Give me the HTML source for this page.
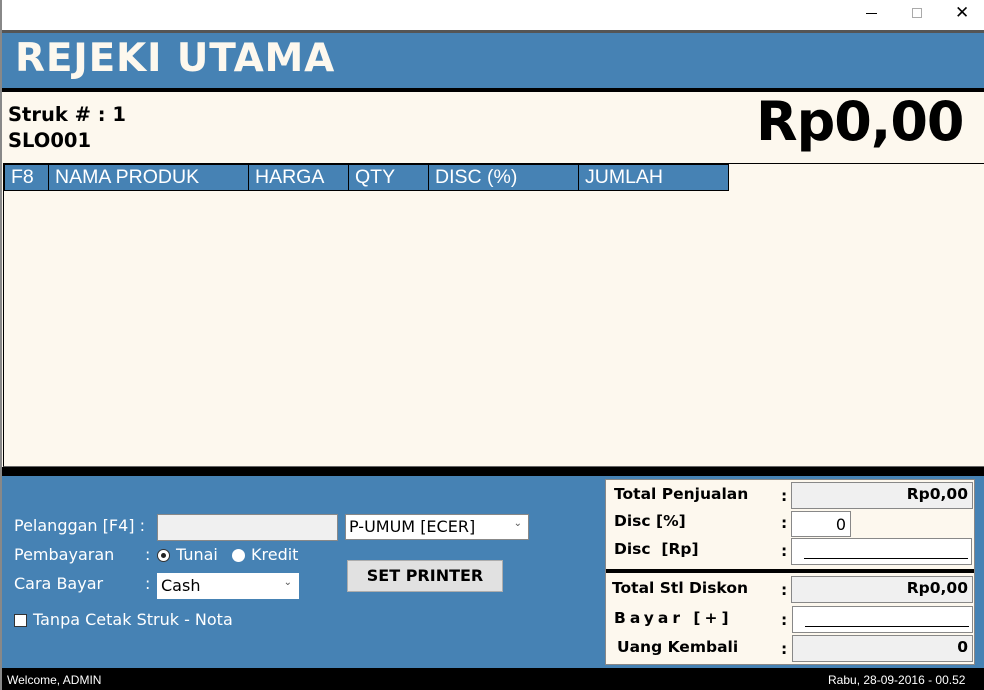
<!DOCTYPE html>
<html><head><style>
*{margin:0;padding:0;box-sizing:border-box}
body{width:984px;height:690px;position:relative;overflow:hidden;background:#fff;font-family:"DejaVu Sans","Liberation Sans",sans-serif}
.a{position:absolute}
.w{color:#fff;font-size:16px}
.b{font-weight:bold;font-size:15.5px;color:#000}
.box{position:absolute;border:1px solid #888;background:#f0f0f0}
.wb{position:absolute;border:1px solid #888;background:#fff}
</style></head><body>
<div class="a" style="left:0;top:0;width:2px;height:690px;background:#888"></div>
<div class="a" style="left:866px;top:13px;width:11px;height:1px;background:#000"></div>
<div class="a" style="left:912px;top:8px;width:10px;height:10px;border:1px solid #aaa"></div>
<div class="a" style="left:955px;top:3px;font-size:17px;color:#000;font-family:'DejaVu Sans'">✕</div>
<div class="a" style="left:2px;top:30px;width:982px;height:3px;background:#555"></div>
<div class="a" style="left:2px;top:33px;width:982px;height:55px;background:#4682b4"></div>
<div class="a" style="left:15px;top:36px;font-size:39px;font-weight:bold;color:#fdf8ee;letter-spacing:0.8px">REJEKI UTAMA</div>
<div class="a" style="left:2px;top:88px;width:982px;height:4px;background:#000"></div>
<div class="a" style="left:2px;top:92px;width:982px;height:375px;background:#fdf8ee"></div>
<div class="a b" style="left:8px;top:103px;font-size:19.5px">Struk # : 1</div>
<div class="a b" style="left:8px;top:129px;font-size:19.5px">SLO001</div>
<div class="a b" style="left:756px;top:90px;font-size:54px;letter-spacing:-1px">Rp0,00</div>
<div class="a" style="left:3px;top:163px;width:981px;height:304px;border-top:1px solid #000;border-left:1px solid #000;border-bottom:1px solid #666"></div>
<div class="a" style="left:4px;top:164px;width:725px;height:27px;background:#4682b4;border:1px solid #000;display:flex;color:#fff;font-size:19.5px;font-family:'Liberation Sans',sans-serif">
<div style="width:44px;border-right:1px solid #000;padding:1px 0 0 6px">F8</div>
<div style="width:200px;border-right:1px solid #000;padding:1px 0 0 6px">NAMA PRODUK</div>
<div style="width:100px;border-right:1px solid #000;padding:1px 0 0 6px">HARGA</div>
<div style="width:80px;border-right:1px solid #000;padding:1px 0 0 6px">QTY</div>
<div style="width:150px;border-right:1px solid #000;padding:1px 0 0 6px">DISC (%)</div>
<div style="padding:1px 0 0 6px">JUMLAH</div>
</div>
<div class="a" style="left:2px;top:467px;width:982px;height:9px;background:#000"></div>
<div class="a" style="left:2px;top:476px;width:982px;height:192px;background:#4682b4"></div>
<div class="a w" style="left:14px;top:516px">Pelanggan [F4] :</div>
<div class="box" style="left:157px;top:514px;width:181px;height:27px"></div>
<div class="wb" style="left:345px;top:514px;width:184px;height:26px;font-size:16px;padding:2px 3px">P-UMUM [ECER]<span style="position:absolute;right:6px;top:3px;font-size:10px;color:#555">⌄</span></div>
<div class="a w" style="left:14px;top:545px">Pembayaran</div>
<div class="a w" style="left:145px;top:545px">:</div>
<div class="a" style="left:157px;top:549px;width:13px;height:13px;border-radius:50%;background:#fff;border:1px solid #333"><div style="margin:3px;width:5px;height:5px;border-radius:50%;background:#222"></div></div>
<div class="a w" style="left:176px;top:545px">Tunai</div>
<div class="a" style="left:232px;top:549px;width:13px;height:13px;border-radius:50%;background:#fff"></div>
<div class="a w" style="left:251px;top:545px">Kredit</div>
<div class="a w" style="left:14px;top:574px">Cara Bayar</div>
<div class="a w" style="left:145px;top:574px">:</div>
<div class="wb" style="left:157px;top:573px;width:142px;height:26px;font-size:16px;padding:2px 3px;border-color:#fff">Cash<span style="position:absolute;right:6px;top:3px;font-size:10px;color:#555">⌄</span></div>
<div class="a" style="left:347px;top:560px;width:156px;height:32px;background:#e1e1e1;border:1px solid #adadad;font-weight:bold;font-size:16px;text-align:center;line-height:30px">SET PRINTER</div>
<div class="a" style="left:14px;top:614px;width:13px;height:13px;background:#fff;border:1px solid #333"></div>
<div class="a w" style="left:33px;top:610px">Tanpa Cetak Struk - Nota</div>
<div class="a" style="left:605px;top:479px;width:370px;height:186px;background:#fdf8ee;border:1px solid #888"></div>
<div class="a" style="left:606px;top:569px;width:368px;height:4px;background:#000"></div>
<div class="a b" style="left:614px;top:485px">Total Penjualan</div>
<div class="a b" style="left:614px;top:512px">Disc [%]</div>
<div class="a b" style="left:614px;top:540px">Disc &nbsp;[Rp]</div>
<div class="a b" style="left:612px;top:579px">Total Stl Diskon</div>
<div class="a b" style="left:614px;top:609px;letter-spacing:4px">Bayar [+]</div>
<div class="a b" style="left:617px;top:638px">Uang Kembali</div>
<div class="a b" style="left:781px;top:487px">:</div>
<div class="a b" style="left:781px;top:514px">:</div>
<div class="a b" style="left:781px;top:542px">:</div>
<div class="a b" style="left:781px;top:581px">:</div>
<div class="a b" style="left:781px;top:611px">:</div>
<div class="a b" style="left:781px;top:640px">:</div>
<div class="box b" style="left:791px;top:482px;width:182px;height:27px;text-align:right;padding:2px 4px">Rp0,00</div>
<div class="wb" style="left:791px;top:511px;width:60px;height:26px;text-align:right;padding:3px 4px;font-size:16px">0</div>
<div class="wb" style="left:791px;top:538px;width:181px;height:27px"><div style="position:absolute;left:12px;right:3px;bottom:5px;height:1px;background:#000"></div></div>
<div class="box b" style="left:791px;top:576px;width:182px;height:27px;text-align:right;padding:2px 4px">Rp0,00</div>
<div class="wb" style="left:792px;top:606px;width:181px;height:27px"><div style="position:absolute;left:12px;right:3px;bottom:5px;height:1px;background:#000"></div></div>
<div class="box b" style="left:792px;top:635px;width:181px;height:27px;text-align:right;padding:2px 4px">0</div>
<div class="a" style="left:2px;top:668px;width:982px;height:22px;background:#000"></div>
<div class="a" style="left:7px;top:673px;color:#fff;font-size:12px;font-family:'Liberation Sans',sans-serif">Welcome, ADMIN</div>
<div class="a" style="left:828px;top:673px;color:#fff;font-size:12px;font-family:'Liberation Sans',sans-serif">Rabu, 28-09-2016 - 00.52</div>
</body></html>
